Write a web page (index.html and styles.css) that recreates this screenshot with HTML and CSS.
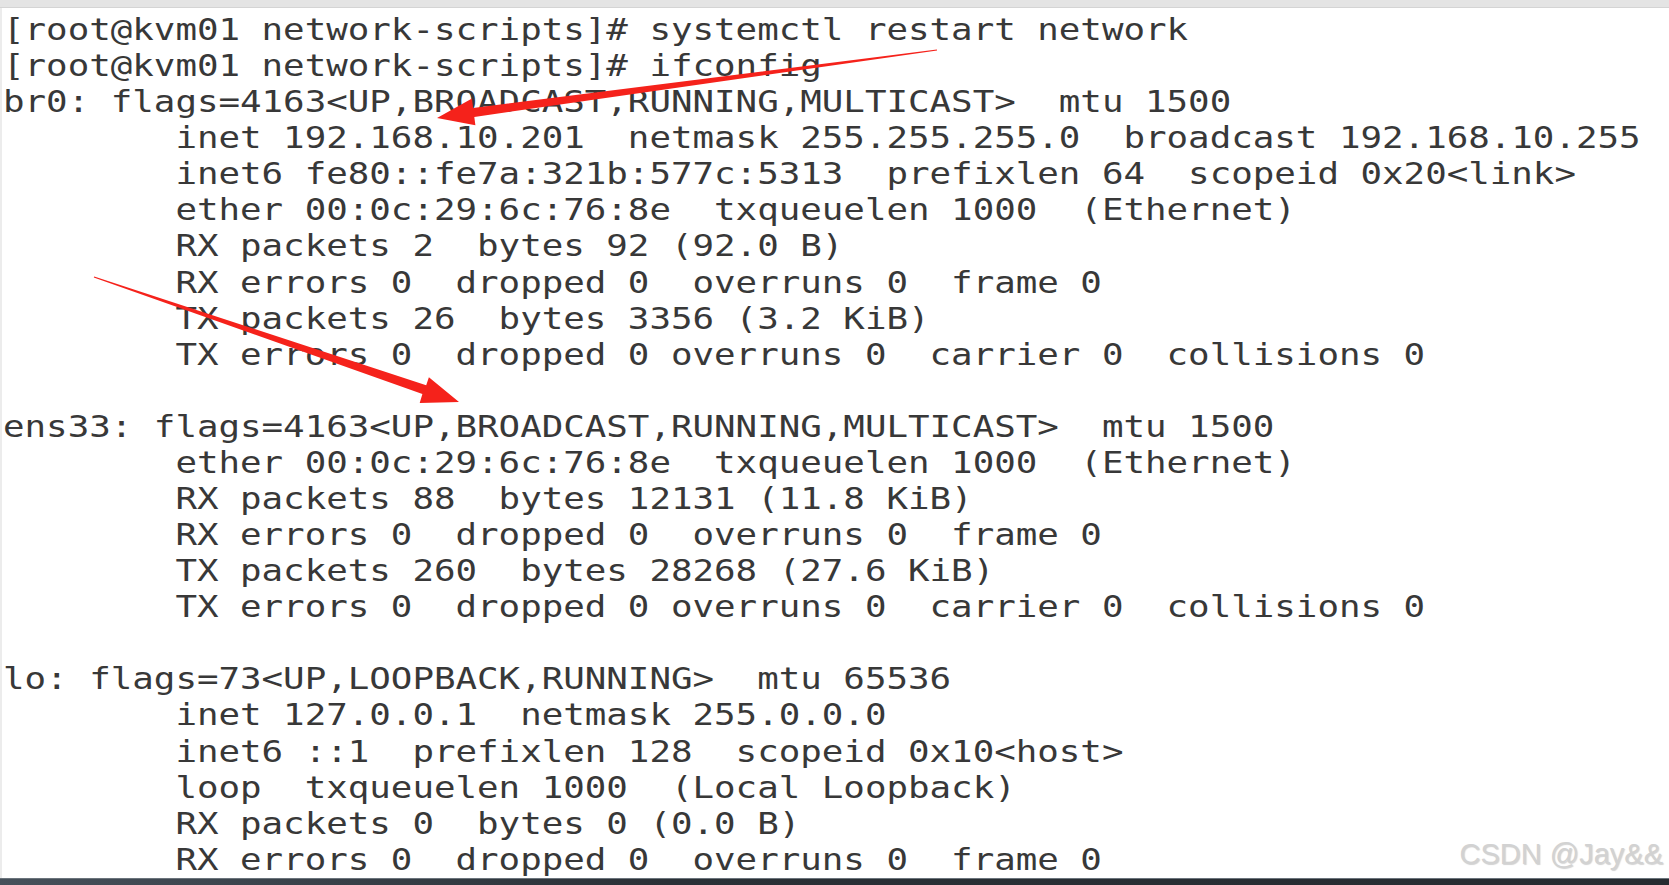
FILE: index.html
```html
<!DOCTYPE html>
<html>
<head>
<meta charset="utf-8">
<link rel="stylesheet" href="styles.css">
</head>
<body>
<div class="page">
  <div class="topbar"></div>
  <div class="terminal">
    <div class="out">
      <div class="ln">[root@kvm01 network-scripts]# systemctl restart network</div>
      <div class="ln">[root@kvm01 network-scripts]# ifconfig</div>
      <div class="ln">br0: flags=4163&lt;UP,BROADCAST,RUNNING,MULTICAST&gt;  mtu 1500</div>
      <div class="ln">        inet 192.168.10.201  netmask 255.255.255.0  broadcast 192.168.10.255</div>
      <div class="ln">        inet6 fe80::fe7a:321b:577c:5313  prefixlen 64  scopeid 0x20&lt;link&gt;</div>
      <div class="ln">        ether 00:0c:29:6c:76:8e  txqueuelen 1000  (Ethernet)</div>
      <div class="ln">        RX packets 2  bytes 92 (92.0 B)</div>
      <div class="ln">        RX errors 0  dropped 0  overruns 0  frame 0</div>
      <div class="ln">        TX packets 26  bytes 3356 (3.2 KiB)</div>
      <div class="ln">        TX errors 0  dropped 0 overruns 0  carrier 0  collisions 0</div>
      <div class="ln blank"></div>
      <div class="ln">ens33: flags=4163&lt;UP,BROADCAST,RUNNING,MULTICAST&gt;  mtu 1500</div>
      <div class="ln">        ether 00:0c:29:6c:76:8e  txqueuelen 1000  (Ethernet)</div>
      <div class="ln">        RX packets 88  bytes 12131 (11.8 KiB)</div>
      <div class="ln">        RX errors 0  dropped 0  overruns 0  frame 0</div>
      <div class="ln">        TX packets 260  bytes 28268 (27.6 KiB)</div>
      <div class="ln">        TX errors 0  dropped 0 overruns 0  carrier 0  collisions 0</div>
      <div class="ln blank"></div>
      <div class="ln">lo: flags=73&lt;UP,LOOPBACK,RUNNING&gt;  mtu 65536</div>
      <div class="ln">        inet 127.0.0.1  netmask 255.0.0.0</div>
      <div class="ln">        inet6 ::1  prefixlen 128  scopeid 0x10&lt;host&gt;</div>
      <div class="ln">        loop  txqueuelen 1000  (Local Loopback)</div>
      <div class="ln">        RX packets 0  bytes 0 (0.0 B)</div>
      <div class="ln">        RX errors 0  dropped 0  overruns 0  frame 0</div>
    </div>
  </div>
  <div class="bottombar"></div>
  <svg class="arrows" width="1669" height="885" viewBox="0 0 1669 885">
    <polygon fill="#f5221b" points="936.9,49.5 473.1,107.9 472.0,98.5 437,118 475.4,125.3 474.3,116.9 937.1,50.5"/>
    <polygon fill="#f5221b" points="93.8,277.5 422.4,393.9 419.7,402.9 459,402 428.9,377.3 426.2,385.3 94.2,276.5"/>
  </svg>
  <div class="watermark">CSDN @Jay&amp;&amp;</div>
</div>
</body>
</html>
```
FILE: styles.css
```css
html, body {
  margin: 0;
  padding: 0;
  background: #ffffff;
}
.page {
  position: relative;
  width: 1669px;
  height: 885px;
  display: flex;
  flex-direction: column;
  overflow: hidden;
}
.topbar {
  height: 7px;
  background: #e4e4e4;
  border-bottom: 1px solid #d4d4d4;
  flex: none;
}
.terminal {
  flex: 1;
  overflow: hidden;
  border-left: 2px solid #ececec;
  padding: 4px 0 0 1px;
}
.out {
  font-family: "DejaVu Sans Mono", monospace;
  font-size: 30px;
  line-height: 36.08px;
  color: #383838;
  transform: scaleX(1.193);
  transform-origin: 0 0;
}
.ln {
  white-space: pre;
  width: max-content;
  height: 36.08px;
}
.bottombar {
  height: 6px;
  flex: none;
  background: linear-gradient(90deg, #46505a, #2a3036 40%, #262b30);
  border-top: 1px solid #6b747c;
}
.arrows {
  position: absolute;
  left: 0;
  top: 0;
  pointer-events: none;
}
.watermark {
  position: absolute;
  right: 6px;
  bottom: 14px;
  font-family: "Liberation Sans", Arial, sans-serif;
  font-size: 29px;
  color: #d2d2d2;
  text-shadow: 1px 1px 1px rgba(0, 0, 0, 0.18);
}
```
